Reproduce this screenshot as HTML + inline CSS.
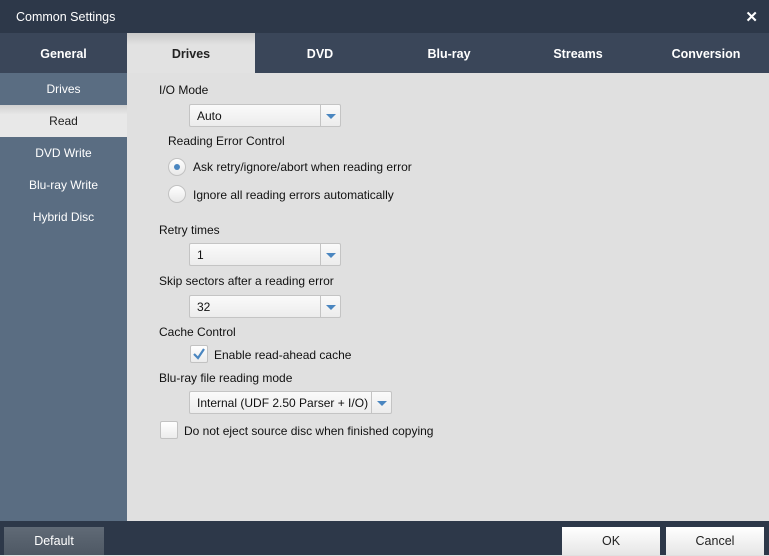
<!DOCTYPE html>
<html><head><style>
*{margin:0;padding:0;box-sizing:border-box}
body{width:769px;height:555px;position:relative;overflow:hidden;font-family:"Liberation Sans",sans-serif;font-size:12px;color:#111;background:#e0e0e0}
.a{position:absolute}
.title{left:0;top:0;width:769px;height:33px;background:#2d3849;color:#fff;font-size:12.5px;padding:10px 16px}
.tabs{left:0;top:33px;width:769px;height:40px;background:#3a4659}
.tab{position:absolute;top:0;height:40px;line-height:42px;text-align:center;color:#fff;font-weight:bold;font-size:12.5px}
.tab.on{background:linear-gradient(#c9c9c9,#e2e2e2 30%,#e2e2e2);color:#222}
.side{left:0;top:73px;width:127px;height:448px;background:#5a6d82}
.si{position:absolute;left:0;width:127px;height:32px;line-height:33px;text-align:center;color:#fff}
.dd{position:absolute;height:23px;background:linear-gradient(#fafafa,#ececec);border:1px solid #c4c4c4;border-radius:2px;padding-left:7px;line-height:22px}
.dd .ar{position:absolute;right:0;top:0;width:20px;height:21px;border-left:1px solid #c4c4c4}
.dd .ar:after{content:"";position:absolute;left:5px;top:9px;border-left:5px solid transparent;border-right:5px solid transparent;border-top:5px solid #4a86c0}
.lbl{position:absolute}
.rad{position:absolute;width:18px;height:18px;border-radius:50%;border:1px solid #c2c2c2;background:linear-gradient(#fff,#e8e8e8)}
.cb{position:absolute;width:18px;height:18px;border:1px solid #c2c2c2;border-radius:2px;background:linear-gradient(#fff,#ececec)}
.bot{left:0;top:521px;width:769px;height:34px;background:#2d3849}
.btn{position:absolute;top:527px;height:28px;line-height:29px;text-align:center;font-size:12.5px}
</style></head><body>
<div class="a title">Common Settings</div>
<div class="a" style="right:11px;top:8px;color:#fff;font-size:15px;font-weight:bold">✕</div>
<div class="a tabs">
<div class="tab" style="left:0;width:127px">General</div>
<div class="tab on" style="left:127px;width:128px">Drives</div>
<div class="tab" style="left:255px;width:130px">DVD</div>
<div class="tab" style="left:385px;width:128px">Blu-ray</div>
<div class="tab" style="left:513px;width:130px">Streams</div>
<div class="tab" style="left:643px;width:126px">Conversion</div>
</div>
<div class="a side">
<div class="si" style="top:0">Drives</div>
<div class="si" style="top:32px;background:linear-gradient(#d0d0d0,#e8e8e8 30%);color:#222">Read</div>
<div class="si" style="top:64px">DVD Write</div>
<div class="si" style="top:96px">Blu-ray Write</div>
<div class="si" style="top:128px">Hybrid Disc</div>
</div>
<div class="lbl" style="left:159px;top:83px">I/O Mode</div>
<div class="dd" style="left:189px;top:104px;width:152px">Auto<div class="ar"></div></div>
<div class="lbl" style="left:168px;top:134px">Reading Error Control</div>
<div class="rad" style="left:168px;top:158px"><div style="position:absolute;left:5px;top:5px;width:6px;height:6px;border-radius:50%;background:#4a86c0"></div></div>
<div class="lbl" style="left:193px;top:160px">Ask retry/ignore/abort when reading error</div>
<div class="rad" style="left:168px;top:185px"></div>
<div class="lbl" style="left:193px;top:188px">Ignore all reading errors automatically</div>
<div class="lbl" style="left:159px;top:223px">Retry times</div>
<div class="dd" style="left:189px;top:243px;width:152px">1<div class="ar"></div></div>
<div class="lbl" style="left:159px;top:274px">Skip sectors after a reading error</div>
<div class="dd" style="left:189px;top:295px;width:152px">32<div class="ar"></div></div>
<div class="lbl" style="left:159px;top:325px">Cache Control</div>
<div class="cb" style="left:190px;top:345px"><svg width="16" height="16" style="position:absolute;left:0;top:0"><path d="M3 8 L7 12 L13 3" stroke="#4a86c0" stroke-width="2.2" fill="none"/></svg></div>
<div class="lbl" style="left:214px;top:348px">Enable read-ahead cache</div>
<div class="lbl" style="left:159px;top:371px">Blu-ray file reading mode</div>
<div class="dd" style="left:189px;top:391px;width:203px">Internal (UDF 2.50 Parser + I/O)<div class="ar"></div></div>
<div class="cb" style="left:160px;top:421px"></div>
<div class="lbl" style="left:184px;top:424px">Do not eject source disc when finished copying</div>
<div class="a bot"></div>
<div class="btn" style="left:4px;width:100px;background:linear-gradient(#606a76,#4e5864);color:#fff">Default</div>
<div class="btn" style="left:562px;width:98px;background:linear-gradient(#fff,#e6e6e6);color:#222">OK</div>
<div class="btn" style="left:666px;width:98px;background:linear-gradient(#fff,#e6e6e6);color:#222">Cancel</div>
</body></html>
